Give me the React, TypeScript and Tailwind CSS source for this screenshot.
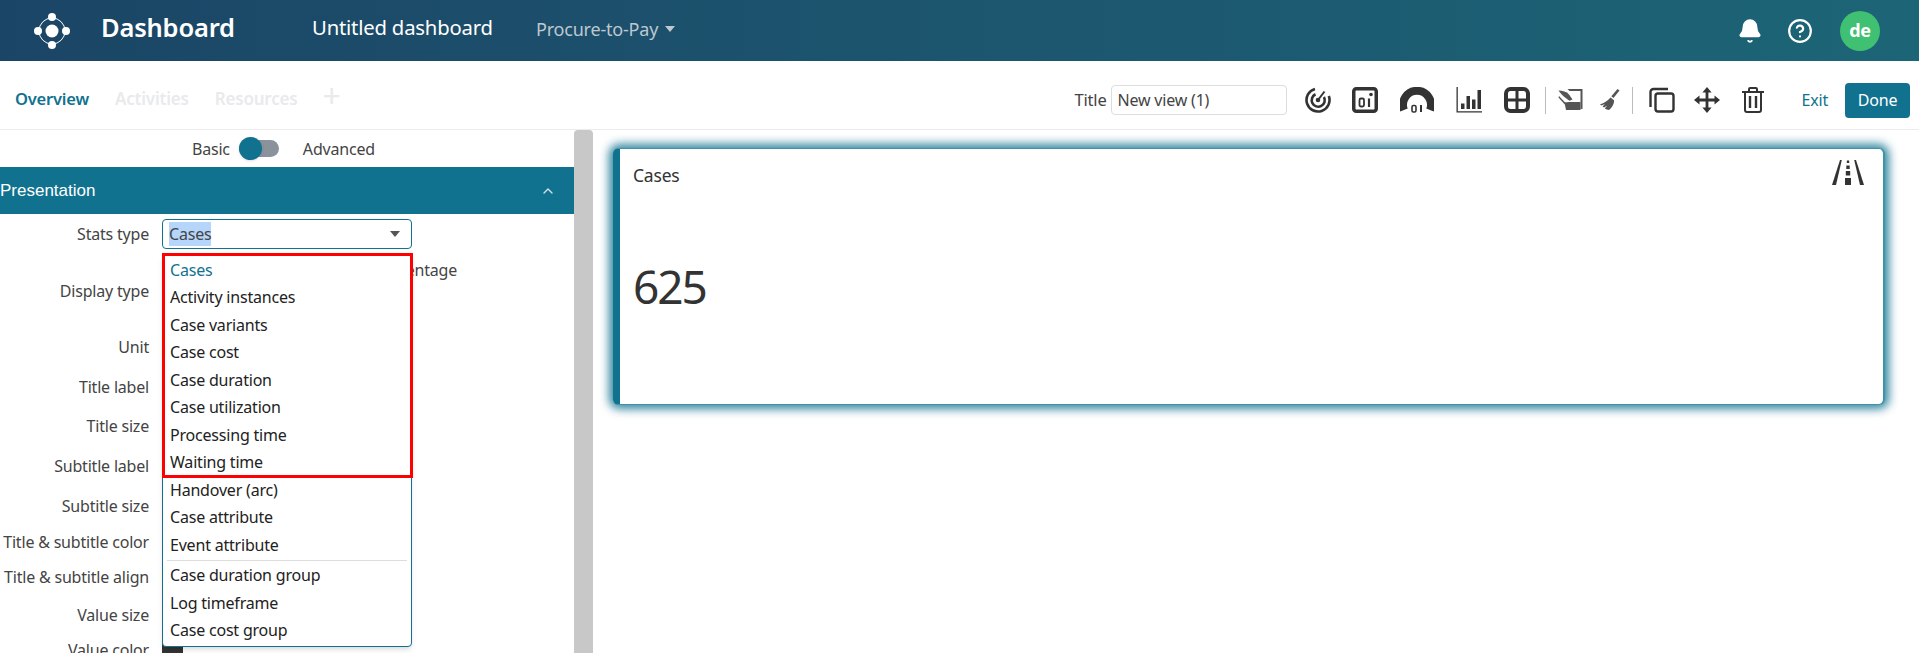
import React from 'react'
import { Bell, ChevronUp, CircleHelp } from 'lucide-react'

const options = [
  'Cases',
  'Activity instances',
  'Case variants',
  'Case cost',
  'Case duration',
  'Case utilization',
  'Processing time',
  'Waiting time',
  'Handover (arc)',
  'Case attribute',
  'Event attribute',
]
const groupOptions = ['Case duration group', 'Log timeframe', 'Case cost group']

function Logo() {
  return (
    <svg width="40" height="40" viewBox="0 0 40 40" fill="#fff">
      <circle cx="20" cy="20" r="6.500" />
      <circle cx="20" cy="6" r="4" />
      <circle cx="20" cy="34" r="4" />
      <circle cx="6" cy="20" r="4" />
      <circle cx="34" cy="20" r="4" />
      <circle cx="20" cy="20" r="13" fill="none" stroke="#fff" strokeWidth="1" />
    </svg>
  )
}

function RadarIcon() {
  return (
    <svg width="26" height="26" viewBox="0 0 26 26" fill="none" stroke="#333" strokeWidth="2.600">
      <path d="M10 1.900A11.500 11.500 0 1 0 23.800 9" />
      <path d="M10.500 7.300A6.500 6.500 0 1 0 18.900 10" />
      <path d="M13 13L19.500 4.500" strokeWidth="2" />
      <circle cx="13" cy="13" r="2.300" fill="#333" stroke="none" />
    </svg>
  )
}

function StatIcon() {
  return (
    <svg width="26" height="26" viewBox="0 0 26 26" fill="none">
      <rect x="1.750" y="1.750" width="22.500" height="22.500" rx="2.500" stroke="#333" strokeWidth="3.500" />
      <circle cx="19" cy="7.500" r="1.800" fill="#333" />
      <rect x="7.500" y="11.500" width="4.500" height="8" rx="1.500" stroke="#333" strokeWidth="1.800" />
      <path d="M17 11.500v8.500" stroke="#333" strokeWidth="2.200" />
    </svg>
  )
}

function GaugeIcon() {
  return (
    <svg width="34" height="26" viewBox="0 0 34 26" fill="none">
      <path d="M4 23A14 14 0 1 1 30 23" stroke="#333" strokeWidth="8" />
      <rect x="12" y="18.500" width="4" height="6.500" rx="1.400" stroke="#333" strokeWidth="1.600" />
      <path d="M21 18v7" stroke="#333" strokeWidth="2" />
    </svg>
  )
}

function BarsIcon() {
  return (
    <svg width="26" height="26" viewBox="0 0 26 26" fill="#333">
      <path d="M0.500 0h1.300v24.200H26V25.500H0.500z" />
      <rect x="5" y="16.500" width="3.500" height="5.500" />
      <rect x="10.500" y="9" width="3.500" height="13" />
      <rect x="16" y="12.500" width="3.500" height="9.500" />
      <rect x="21.500" y="3" width="3.500" height="19" />
    </svg>
  )
}

function TableIcon() {
  return (
    <svg width="26" height="26" viewBox="0 0 26 26" fill="none" stroke="#333">
      <rect x="2" y="2" width="22" height="22" rx="4.500" strokeWidth="4" />
      <path d="M2 13h22" strokeWidth="3" />
      <path d="M13 2v22" strokeWidth="3" />
    </svg>
  )
}

function ClearIcon() {
  return (
    <svg width="25" height="22" viewBox="0 0 25 22" fill="#555">
      <path d="M1 0H24.500V20H22.500V2H11.500L9.500 0z" />
      <path d="M0.500 1.500c4 0 8 1 10.500 4l3.500 5-3 1.200C8 9.500 3.500 6 0.500 1.500z" />
      <path d="M1 7l7 7.500-1.200 1L0.500 8.500z" />
      <path d="M6.500 13.500l4.500-.5h11.500v8H8z" />
    </svg>
  )
}

function BroomIcon() {
  return (
    <svg width="24" height="24" viewBox="0 0 24 24" fill="#555">
      <path d="M20.500 1l2 1.600-6 7.400-2.200-1.800z" />
      <path d="M13.500 9.500l3.500 2.800c.5 3-2 7.700-5 9.700-1.500-.2-3-.8-4.200-1.500l2.400-3-3.200 2.100-1.400-1.100 2.300-2.400-3.500 1.300L3 16.300C6 15.800 10.500 13 13.500 9.500z" />
    </svg>
  )
}

function CopyIcon() {
  return (
    <svg width="26" height="26" viewBox="0 0 26 26" fill="none" stroke="#333" strokeWidth="2.400">
      <rect x="6.500" y="6.500" width="18" height="18" rx="2.500" />
      <path d="M19 2H4.500A3 3 0 0 0 1.500 5v15" />
    </svg>
  )
}

function MoveIcon() {
  return (
    <svg width="26" height="26" viewBox="0 0 26 26" fill="#333">
      <path d="M13 0l4.600 5.500h-3.200v6.100h6.100V8.400l5.500 4.600-5.500 4.600v-3.200h-6.100v6.100h3.200L13 26l-4.600-5.500h3.200v-6.100H5.500v3.200L0 13l5.500-4.600v3.200h6.100V5.500H8.400z" />
    </svg>
  )
}

function TrashIcon() {
  return (
    <svg width="22" height="26" viewBox="0 0 22 26" fill="none" stroke="#333" strokeWidth="2">
      <path d="M0 5h22" />
      <path d="M7 5V2.200C7 1.500 7.500 1 8.200 1h5.600c.7 0 1.200.5 1.200 1.200V5" />
      <path d="M3 5v18c0 1.200.8 2 2 2h12c1.200 0 2-.8 2-2V5" />
      <path d="M8 9v12M14 9v12" strokeWidth="2.400" />
    </svg>
  )
}

function RoadIcon() {
  return (
    <svg width="32" height="26" viewBox="0 0 32 26" fill="#333">
      <path d="M8 0h1.800L4 25H0z" />
      <path d="M24 0h-1.800L28 25H32z" />
      <rect x="14.800" y="0.500" width="2.400" height="2.500" />
      <rect x="14.300" y="5.500" width="3.400" height="3.500" />
      <rect x="13.800" y="11" width="4.400" height="4.500" />
      <rect x="13" y="18" width="6" height="7" />
    </svg>
  )
}

function Row({ label, className, children }: { label: string; className: string; children?: React.ReactNode }) {
  return (
    <div className={`flex items-center shrink-0 ${className}`}>
      <div className="w-[149px] text-right whitespace-nowrap shrink-0">{label}</div>
      <div className="ml-[13px]">{children}</div>
    </div>
  )
}

export default function App() {
  return (
    <div className="h-[653px] w-[1919px] overflow-hidden bg-white font-['Noto_Sans',sans-serif] text-[16px] tracking-[-0.2px] text-[#444]">
      <header className="h-[61px] flex items-center bg-gradient-to-r from-[#1b4566] to-[#1c6576] text-white">
        <div className="ml-[32px]"><Logo /></div>
        <div className="ml-[29px] w-[211px] text-[25.500px] font-semibold pb-[7px]">Dashboard</div>
        <div className="text-[20.300px] pb-[7px] w-[224px]">Untitled dashboard</div>
        <div className="text-[18px] text-[#bdc8d0] pb-[3px]">Procure-to-Pay</div>
        <div className="ml-[7px] mb-[4px] w-0 h-0 border-x-[5.500px] border-x-transparent border-t-[6px] border-t-[#bdc8d0]" />
        <div className="ml-auto flex items-center">
          <Bell size={26} fill="#fff" strokeWidth={1.500} />
          <CircleHelp size={26} strokeWidth={2} className="ml-[24px]" />
          <div className="ml-[27px] mr-[39px] w-[40px] h-[40px] rounded-full bg-[#3fc072] flex items-center justify-center text-[18px] font-bold">de</div>
        </div>
      </header>

      <div className="h-[69px] flex items-center border-b border-[#ececec] pt-[10px]">
        <div className="ml-[15px] font-semibold text-[#11728f] text-[16.500px] pb-[2px]">Overview</div>
        <div className="ml-[26px] font-semibold text-[#e8eaec] text-[17px] pb-[2px]">Activities</div>
        <div className="ml-[26px] font-semibold text-[#e8eaec] text-[17px] pb-[2px]">Resources</div>
        <div className="ml-[25px] text-[#e8eaec] text-[32px] leading-none pb-[8px]">+</div>
        <div className="ml-auto flex items-center">
          <span className="text-[16.500px]">Title</span>
          <div className="ml-[4px] w-[176px] h-[30px] rounded-[4px] border border-[#ddd] px-[6px] flex items-center text-[16px]">New view (1)</div>
          <div className="ml-[18px] flex items-center">
            <RadarIcon />
            <div className="ml-[21px]"><StatIcon /></div>
            <div className="ml-[22px]"><GaugeIcon /></div>
            <div className="ml-[22px]"><BarsIcon /></div>
            <div className="ml-[22px]"><TableIcon /></div>
            <div className="ml-[15px] w-px h-[27px] bg-[#bbb]" />
            <div className="ml-[12px]"><ClearIcon /></div>
            <div className="ml-[14px]"><BroomIcon /></div>
            <div className="ml-[11px] w-px h-[27px] bg-[#bbb]" />
            <div className="ml-[16px]"><CopyIcon /></div>
            <div className="ml-[19px]"><MoveIcon /></div>
            <div className="ml-[22px]"><TrashIcon /></div>
          </div>
          <span className="ml-[38px] text-[#11728f] text-[16px]">Exit</span>
          <div className="ml-[17px] mr-[9px] w-[65px] h-[35px] rounded-[4px] bg-[#11728f] text-white flex items-center justify-center text-[16px]">Done</div>
        </div>
      </div>

      <div className="flex h-[523px]">
        <aside className="relative w-[574px] shrink-0 overflow-hidden">
          <div className="h-[37px] flex items-center">
            <span className="ml-[192px]">Basic</span>
            <div className="relative ml-[9px] w-[40px] h-[17px] rounded-full bg-[#8a929c]">
              <div className="absolute left-0 top-[-3px] w-[23px] h-[23px] rounded-full bg-[#11728f] shadow-sm" />
            </div>
            <span className="ml-[24px]">Advanced</span>
          </div>
          <div className="h-[47px] bg-[#11728f] text-white flex items-center justify-between font-['Liberation_Sans',sans-serif] text-[17px] tracking-normal pr-[18px] pt-[1px]">
            Presentation
            <ChevronUp size={16} className="text-[#cfe3ea]" />
          </div>
          <div className="flex flex-col">
            <Row label="Stats type" className="h-[30px] mt-[5px]">
              <div className="w-[250px] h-[30px] rounded-[4px] border border-[#11728f] flex items-center px-[6px]">
                <span className="bg-[#b5d5fb]">Cases</span>
                <div className="ml-auto mr-[5px] w-0 h-0 border-x-[5px] border-x-transparent border-t-[6px] border-t-[#555]" />
              </div>
            </Row>
            <div className="flex h-[72px] mt-[6px] shrink-0">
              <div className="w-[149px] text-right self-center">Display type</div>
              <div className="ml-[13px] w-[295px] h-[30px] flex items-center justify-end">Percentage</div>
            </div>
            <Row label="Unit" className="h-[30px] mt-[5px]" />
            <Row label="Title label" className="h-[30px] mt-[10px]" />
            <Row label="Title size" className="h-[30px] mt-[9px]" />
            <Row label="Subtitle label" className="h-[30px] mt-[10px]" />
            <Row label="Subtitle size" className="h-[30px] mt-[10px]" />
            <Row label="Title & subtitle color" className="h-[30px] mt-[6px]" />
            <Row label="Title & subtitle align" className="h-[30px] mt-[5px]" />
            <Row label="Value size" className="h-[30px] mt-[8px]" />
            <Row label="Value color" className="h-[30px] mt-[5px]">
              <div className="w-[21px] h-[30px] bg-[#333]" />
            </Row>
          </div>

          <div className="absolute left-[162px] top-[123px] w-[250px] h-[394px] bg-white border border-[#11728f] rounded-[4px] shadow-md pt-[2px] text-[#222]">
            {options.map((o, i) => (
              <div key={o} className={`h-[27.500px] pl-[7px] flex items-center ${i === 0 ? 'text-[#11728f]' : ''}`}>{o}</div>
            ))}
            <div className="mx-[4px] my-[1px] h-px bg-[#ddd]" />
            {groupOptions.map((o) => (
              <div key={o} className="h-[27.500px] pl-[7px] flex items-center">{o}</div>
            ))}
            <div className="absolute left-[-1px] top-[-1px] w-[251px] h-[225px] border-[3px] border-[#f00] pointer-events-none" />
          </div>
        </aside>

        <div className="w-[19px] shrink-0 bg-[#c8c8c8] rounded-t-[4px]" />

        <main className="flex-1 pt-[18px] pl-[20px] pr-[34px]">
          <div className="relative h-[257px] bg-white rounded-[6px] border-l-[7px] border-l-[#11728f] border-y border-r-2 border-[#3f93a9] shadow-[0_0_10px_4px_rgba(17,114,143,0.85)] pl-[13px] pt-[13px] text-[#333]">
            <div className="text-[17.500px]">Cases</div>
            <div className="mt-[75px] text-[46px] tracking-[-2px] leading-none">625</div>
            <div className="absolute right-[19px] top-[11px]"><RoadIcon /></div>
          </div>
        </main>
      </div>
    </div>
  )
}
